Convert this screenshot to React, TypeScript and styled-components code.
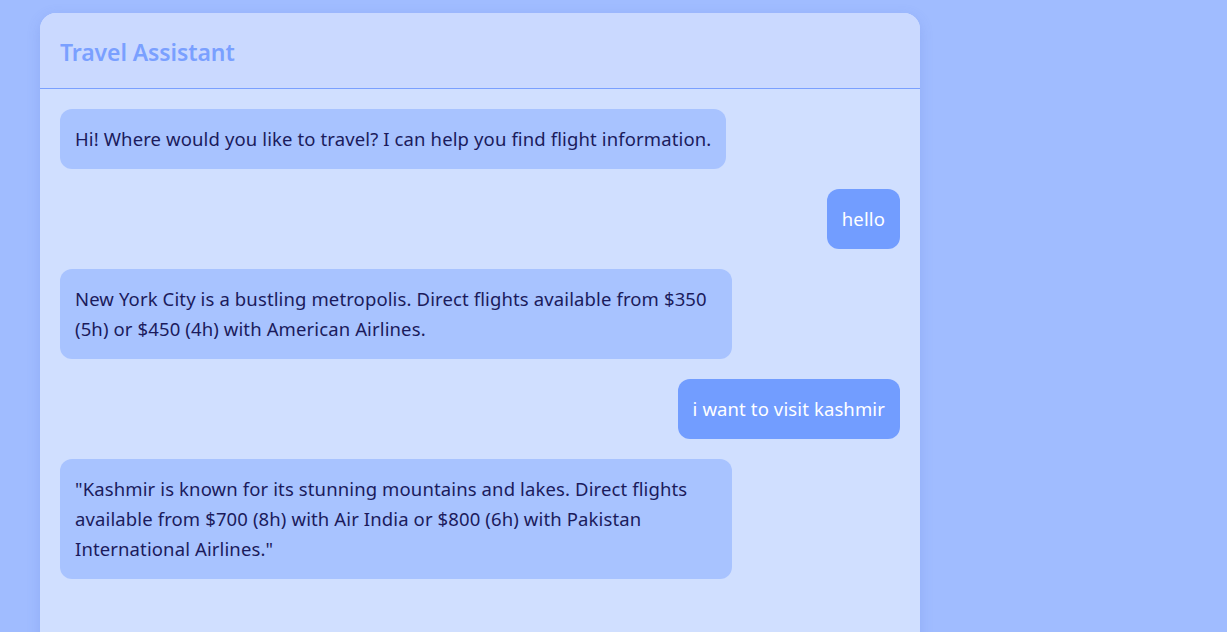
import styled, { createGlobalStyle } from 'styled-components'

/*
 * Types.
 */

interface Message {
  from: 'bot' | 'user'
  text: string
}

/*
 * Data.
 */

const messages: Message[] = [
  { from: 'bot', text: 'Hi! Where would you like to travel? I can help you find flight information.' },
  { from: 'user', text: 'hello' },
  {
    from: 'bot',
    text: 'New York City is a bustling metropolis. Direct flights available from $350 (5h) or $450 (4h) with American Airlines.',
  },
  { from: 'user', text: 'i want to visit kashmir' },
  {
    from: 'bot',
    text: '"Kashmir is known for its stunning mountains and lakes. Direct flights available from $700 (8h) with Air India or $800 (6h) with Pakistan International Airlines."',
  },
]

/*
 * Styles.
 */

const GlobalStyle = createGlobalStyle`
  html, body {
    margin: 0;
    padding: 0;
    background: #a0bcff;
    height: 100%;
    overflow: hidden;
  }
  body {
    font-family: 'Noto Sans', 'Open Sans', sans-serif;
  }
`

const Page = styled.div`
  padding: 13px 40px 0;
`

const ChatCard = styled.div`
  width: 880px;
  min-height: 700px;
  background: #d0dfff;
  border-radius: 16px 16px 0 0;
  box-shadow: 0 4px 14px rgba(70, 100, 200, 0.18);
  display: flex;
  flex-direction: column;
`

const Header = styled.div`
  height: 75px;
  padding: 0 20px;
  display: flex;
  align-items: center;
  background: #cad9ff;
  border-radius: 16px 16px 0 0;
  border-bottom: 1px solid #7aa0ff;
`

const Title = styled.h1`
  margin: 2px 0 0;
  font-size: 23px;
  font-weight: 600;
  color: #7aa0ff;
  letter-spacing: -0.1px;
`

const MessageList = styled.div`
  padding: 20px;
  display: flex;
  flex-direction: column;
  gap: 20px;
`

const Row = styled.div<{ $user: boolean }>`
  display: flex;
  justify-content: ${({ $user }) => ($user ? 'flex-end' : 'flex-start')};
`

const Bubble = styled.div<{ $user: boolean }>`
  max-width: 80%;
  box-sizing: border-box;
  padding: 15px;
  border-radius: 12px;
  font-size: 18.5px;
  line-height: 30px;
  letter-spacing: 0.12px;
  background: ${({ $user }) => ($user ? '#729dff' : '#a8c3ff')};
  color: ${({ $user }) => ($user ? '#ffffff' : '#1b1b5c')};
`

/*
 * Component.
 */

export default function App() {
  return (
    <>
      <GlobalStyle />
      <Page>
        <ChatCard>
          <Header>
            <Title>Travel Assistant</Title>
          </Header>
          <MessageList>
            {messages.map((message, index) => (
              <Row key={index} $user={message.from === 'user'}>
                <Bubble $user={message.from === 'user'}>{message.text}</Bubble>
              </Row>
            ))}
          </MessageList>
        </ChatCard>
      </Page>
    </>
  )
}
